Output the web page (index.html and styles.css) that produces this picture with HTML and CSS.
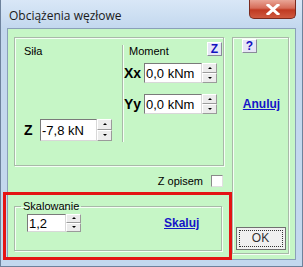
FILE: index.html
```html
<!DOCTYPE html>
<html lang="pl">
<head>
  <meta charset="UTF-8" />
  <title>Obciążenia węzłowe</title>
  <link rel="stylesheet" href="styles.css">
</head>
<body>
  <div class="window">
    <div class="titlebar">
      <span class="title">Obciążenia węzłowe</span>
      <button class="close">
        <svg width="14" height="11" viewBox="0 0 14 11"><path d="M2 1 L12 10 M12 1 L2 10" stroke="#fff" stroke-width="3" stroke-linecap="square"/></svg>
      </button>
    </div>

    <div class="client">
      <div class="left-col">
        <div class="group main-box">
          <div class="sila">
            <span class="label">Siła</span>
            <div class="field-row">
              <span class="axis z-axis">Z</span>
              <div class="spin-input">
                <input type="text" class="num wide" value="-7,8 kN">
                <div class="spinner"><span class="up"></span><span class="down"></span></div>
              </div>
            </div>
          </div>
          <div class="moment">
            <div class="moment-head">
              <span class="label">Moment</span>
              <button class="small-btn">Z</button>
            </div>
            <div class="field-row">
              <span class="axis">Xx</span>
              <div class="spin-input">
                <input type="text" class="num" value="0,0 kNm">
                <div class="spinner"><span class="up"></span><span class="down"></span></div>
              </div>
            </div>
            <div class="field-row">
              <span class="axis">Yy</span>
              <div class="spin-input">
                <input type="text" class="num" value="0,0 kNm">
                <div class="spinner"><span class="up"></span><span class="down"></span></div>
              </div>
            </div>
          </div>
        </div>

        <div class="opis-row">
          <span class="label">Z opisem</span>
          <span class="checkbox"></span>
        </div>

        <fieldset class="group scale-box">
          <legend class="label">Skalowanie</legend>
          <div class="scale-row">
            <div class="spin-input short">
              <input type="text" class="num small" value="1,2">
              <div class="spinner"><span class="up"></span><span class="down"></span></div>
            </div>
            <a href="#" class="link">Skaluj</a>
          </div>
        </fieldset>
      </div>

      <div class="group right-box">
        <button class="small-btn help">?</button>
        <a href="#" class="link">Anuluj</a>
        <button class="ok"><span>OK</span></button>
      </div>
    </div>

    <div class="highlight"></div>
  </div>
</body>
</html>
```

FILE: styles.css
```css
:root {
  --client: #c6f6c6;
  --frame: #c3d8ee;
  --line: #a9b9a9;
  --link: #1414c8;
}

body {
  margin: 0;
  font-family: 'Liberation Sans', Arial, sans-serif;
  font-size: 11px;
  color: #000;
}

.window {
  position: relative;
  width: 303px;
  height: 267px;
  box-sizing: border-box;
  background: var(--frame);
  border: 1px solid #6d829c;
  border-top: none;
  overflow: hidden;
}

.titlebar {
  height: 28px;
  display: flex;
  justify-content: space-between;
  align-items: flex-start;
  background: linear-gradient(#d9e7f7, #c3d8ee);
}

.title {
  font-family: 'Open Sans', 'Noto Sans', sans-serif;
  font-size: 12px;
  margin: 7px 0 0 8px;
  color: #1a1a1a;
}

.close {
  width: 47px;
  height: 19px;
  margin-right: 6px;
  padding: 0;
  border: 1px solid #7a2a1e;
  border-top: none;
  border-radius: 0 0 5px 5px;
  background: linear-gradient(#e9a596, #d66c58 45%, #c03a22 55%, #cf5a40);
  display: flex;
  align-items: center;
  justify-content: center;
}

.client {
  height: 232px;
  margin: 0 6px;
  box-sizing: border-box;
  background: var(--client);
  border: 1px solid #8aa0b8;
  padding: 8px 5px 0 6px;
  display: flex;
  gap: 8px;
}

.group {
  border: 1px solid var(--line);
  box-shadow: inset 1px 1px 0 #f4fff4, 1px 1px 0 #f4fff4;
  box-sizing: border-box;
}

.left-col {
  width: 210px;
  display: flex;
  flex-direction: column;
}

.main-box {
  height: 129px;
  display: flex;
}

.label {
  font-size: 11px;
  color: #000;
}

.sila {
  width: 107px;
  padding: 7px 0 0 9px;
  box-sizing: border-box;
  display: flex;
  flex-direction: column;
  justify-content: space-between;
  padding-bottom: 24px;
}

.field-row {
  display: flex;
  align-items: center;
}

.axis {
  font-weight: bold;
  font-size: 14px;
  width: 20px;
}

.z-axis {
  width: 16px;
}

.spin-input {
  display: flex;
}

.num {
  width: 58px;
  height: 20px;
  box-sizing: border-box;
  border: 1px solid #7a7a7a;
  border-right-color: #d8d8d8;
  border-bottom-color: #d8d8d8;
  padding: 0 0 0 1px;
  font-family: 'Liberation Sans', Arial, sans-serif;
  font-size: 13px;
  background: #fff;
  outline: none;
}

.num.wide {
  width: 57px;
  height: 22px;
}

.num.small {
  width: 39px;
  height: 18px;
}

.spinner {
  display: flex;
  flex-direction: column;
  width: 15px;
}

.spinner span {
  flex: 1;
  position: relative;
  background: #ececec;
  border: 1px solid #9a9a9a;
  border-top-color: #fff;
  border-left-color: #fff;
  box-sizing: border-box;
}

.spinner span::after {
  content: "";
  position: absolute;
  left: 5px;
  top: 3px;
  border-left: 2px solid transparent;
  border-right: 2px solid transparent;
}

.spinner .up::after {
  border-bottom: 2px solid #000;
}

.spinner .down::after {
  border-top: 2px solid #000;
}

.moment {
  flex: 1;
  margin-top: 7px;
  height: 97px;
  border-left: 1px solid var(--line);
  box-shadow: inset 1px 0 0 #f4fff4;
  display: flex;
  flex-direction: column;
}

.moment-head {
  display: flex;
  justify-content: space-between;
  align-items: flex-start;
  height: 21px;
  margin-top: -3px;
  padding: 0 1px 0 6px;
}

.moment-head .label {
  margin-top: 3px;
}

.moment .field-row {
  margin-bottom: 11px;
  margin-left: 1px;
}

.small-btn {
  width: 15px;
  height: 14px;
  padding: 0;
  border: 1px solid #fff;
  border-right-color: #8a8a9a;
  border-bottom-color: #8a8a9a;
  background: #e6e6f6;
  color: #1010c0;
  font-family: 'Liberation Sans', Arial, sans-serif;
  font-weight: bold;
  font-size: 12px;
  line-height: 12px;
}

.opis-row {
  height: 34px;
  display: flex;
  justify-content: flex-end;
  align-items: flex-start;
  padding: 9px 1px 0 0;
  box-sizing: border-box;
  gap: 8px;
}

.checkbox {
  width: 12px;
  height: 12px;
  box-sizing: border-box;
  background: #fff;
  border: 1px solid #8a8a8a;
  border-right-color: #e0e0e0;
  border-bottom-color: #e0e0e0;
}

.scale-box {
  width: 208px;
  height: 51px;
  margin: 0;
  padding: 0 0 0 12px;
}

.scale-box legend {
  padding: 0 2px;
  margin-left: -6px;
}

.scale-row {
  display: flex;
  align-items: center;
  margin-top: 2px;
}

.spin-input.short .spinner span::after {
  top: 2px;
}

.link {
  color: var(--link);
  font-weight: bold;
  font-size: 12px;
  margin-left: 83px;
}

.right-box {
  width: 57px;
  height: 217px;
  display: flex;
  flex-direction: column;
  align-items: center;
  padding: 1px 0 3px;
}

.right-box .help {
  align-self: flex-start;
  margin-left: 9px;
}

.right-box .link {
  margin: 44px 0 0 2px;
}

.ok {
  margin-top: auto;
  width: 50px;
  height: 23px;
  padding: 2px;
  background: #f0f0f0;
  border: 1px solid #707070;
  font-family: 'Liberation Sans', Arial, sans-serif;
  font-size: 12px;
  color: #333;
}

.ok span {
  display: block;
  height: 100%;
  border: 1px dotted #333;
  box-sizing: border-box;
  line-height: 15px;
}

.highlight {
  position: absolute;
  left: 2px;
  top: 192px;
  width: 229px;
  height: 68px;
  box-sizing: border-box;
  border: 3px solid #e41414;
}
```
